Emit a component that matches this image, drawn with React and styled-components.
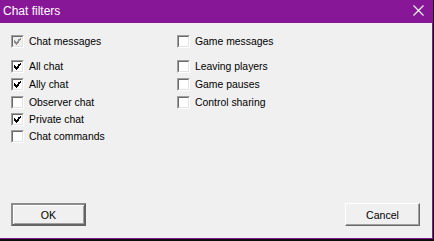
import React from 'react';
import styled, { createGlobalStyle } from 'styled-components';

const Global = createGlobalStyle`
  html, body { margin: 0; padding: 0; background: #000; }
  body { font-family: "Liberation Sans", Arial, sans-serif; }
`;

const Page = styled.div`
  width: 434px;
  height: 241px;
  overflow: hidden;
  background: #0c0c0c;
`;

const Dialog = styled.div`
  width: 432px;
  height: 238px;
  display: flex;
  flex-direction: column;
  border-right: 1px solid #881798;
  border-bottom: 1px solid #881798;
  background: #f0f0f0;
`;

const TitleBar = styled.div`
  height: 23px;
  flex: none;
  display: flex;
  align-items: center;
  justify-content: space-between;
  background: #881798;
  color: #fff;
  font-size: 12px;
  padding: 0 0 2px 3px;
  box-sizing: border-box;
`;

const CloseBox = styled.div`
  width: 24px;
  height: 22px;
  display: flex;
  align-items: center;
  justify-content: center;
  margin-right: 2px;
`;

const Body = styled.div`
  flex: 1;
  display: flex;
  flex-direction: column;
  padding: 12px 12px 12px 11px;
`;

const Columns = styled.div`
  display: grid;
  grid-template-columns: 166px 1fr;
`;

const Column = styled.div`
  display: flex;
  flex-direction: column;
`;

const Row = styled.label`
  height: 13px;
  display: flex;
  align-items: center;
  gap: 5px;
  font-size: 10.4px;
  color: #000;
  margin-top: ${(p) => p.$gap}px;
  white-space: nowrap;
`;

const Box = styled.span`
  width: 13px;
  height: 13px;
  flex: none;
  box-sizing: border-box;
  background: ${(p) => (p.$disabled ? '#f0f0f0' : '#fff')};
  border-top: 1px solid #a0a0a0;
  border-left: 1px solid #a0a0a0;
  border-right: 1px solid #fff;
  border-bottom: 1px solid #fff;
  position: relative;
  &::after {
    content: '';
    position: absolute;
    inset: 0;
    border-top: 1px solid #696969;
    border-left: 1px solid #696969;
    border-right: 1px solid #e3e3e3;
    border-bottom: 1px solid #e3e3e3;
  }
  svg { position: absolute; left: 2px; top: 2px; z-index: 1; }
`;

const Label = styled.span`
  line-height: 13px;
`;

const Buttons = styled.div`
  margin-top: auto;
  display: flex;
  justify-content: space-between;
`;

const Button = styled.button`
  width: 75px;
  height: 23px;
  padding: 0;
  box-sizing: border-box;
  font-family: "Liberation Sans", Arial, sans-serif;
  font-size: 10.6px;
  color: #000;
  background: #f0f0f0;
  border-style: solid;
  border-width: ${(p) => (p.$default ? '2px' : '1px')};
  border-color: ${(p) =>
    p.$default ? '#8c8c8c #646464 #646464 #8c8c8c' : '#fff #696969 #696969 #fff'};
  box-shadow: ${(p) =>
    p.$default ? 'inset 1px 1px 0 #fff, inset -1px -1px 0 #a0a0a0' : 'inset -1px -1px 0 #a0a0a0'};
`;

function Check({ color }) {
  return (
    <svg width="7" height="7" viewBox="0 0 7 7" shapeRendering="crispEdges">
      <path
        d="M0 2h1v1h-1zM0 3h2v1h-2zM0 4h3v1h-3zM1 5h3v1h-3zM2 6h1v1h-1zM3 3h2v2h-2zM4 1h2v2h-2zM6 0h1v2h-1zM5 2h1v1h-1z"
        fill={color}
      />
    </svg>
  );
}

function CheckItem({ label, checked, disabled, gap = 0 }) {
  return (
    <Row $gap={gap}>
      <Box $disabled={disabled}>
        {checked && <Check color={disabled ? '#8d8d8d' : '#000'} />}
      </Box>
      <Label>{label}</Label>
    </Row>
  );
}

const left = [
  { label: 'All chat', checked: true },
  { label: 'Ally chat', checked: true },
  { label: 'Observer chat' },
  { label: 'Private chat', checked: true },
  { label: 'Chat commands' },
];

const right = [
  { label: 'Leaving players' },
  { label: 'Game pauses' },
  { label: 'Control sharing' },
];

export default function App() {
  return (
    <Page>
      <Global />
      <Dialog>
        <TitleBar>
          <span>Chat filters</span>
          <CloseBox>
            <svg width="11" height="11" viewBox="0 0 11 11">
              <path d="M0.5 0.5L10.5 10.5M10.5 0.5L0.5 10.5" stroke="#fff" strokeWidth="1.1" />
            </svg>
          </CloseBox>
        </TitleBar>
        <Body>
          <Columns>
            <Column>
              <CheckItem label="Chat messages" checked disabled />
              {left.map((it, i) => (
                <CheckItem key={it.label} {...it} gap={i === 0 ? 12 : i > 2 ? 4 : 5} />
              ))}
            </Column>
            <Column>
              <CheckItem label="Game messages" />
              {right.map((it, i) => (
                <CheckItem key={it.label} {...it} gap={i === 0 ? 12 : 5} />
              ))}
            </Column>
          </Columns>
          <Buttons>
            <Button $default>OK</Button>
            <Button>Cancel</Button>
          </Buttons>
        </Body>
      </Dialog>
    </Page>
  );
}
